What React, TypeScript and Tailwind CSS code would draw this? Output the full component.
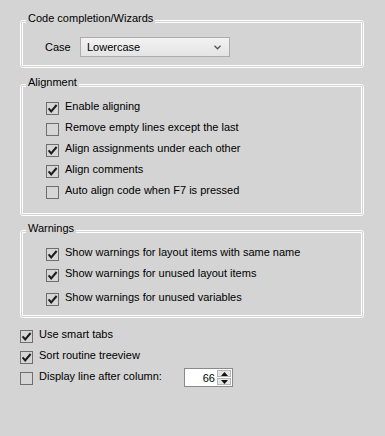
import type { ReactNode } from 'react';

function CheckBox({ checked }: { checked: boolean }) {
  return (
    <span className="mt-[3px] flex h-[13px] w-[13px] shrink-0 items-center justify-center border border-[#6e6e6e] bg-[#d6d6d6]">
      {checked && (
        <svg width="11" height="11" viewBox="0 0 11 11">
          <path d="M1.6 5.3 L4.2 8.4 L9.6 2" fill="none" stroke="#1c1c1c" strokeWidth="2" />
        </svg>
      )}
    </span>
  );
}

function Option({ label, checked, className = '' }: { label: string; checked: boolean; className?: string }) {
  return (
    <div className={`flex items-start gap-[6px] ${className}`}>
      <CheckBox checked={checked} />
      <span>{label}</span>
    </div>
  );
}

function Group({ title, className = '', children }: { title: string; className?: string; children: ReactNode }) {
  return (
    <div className={`relative w-[344px] rounded-[3px] border-[3px] border-double border-white ${className}`}>
      <span className="absolute -top-[12px] left-[3px] bg-[#d4d4d4] px-[2px]">{title}</span>
      {children}
    </div>
  );
}

export default function App() {
  return (
    <div className="h-screen w-full bg-[#d4d4d4] pl-[20px] pt-[20px] font-['Liberation_Sans',Arial,sans-serif] text-[11px] leading-[14px] text-black">
      <Group title="Code completion/Wizards" className="pb-[8px] pt-[14px]">
        <div className="flex items-center pl-[22px]">
          <span className="w-[35px] shrink-0">Case</span>
          <div className="flex h-[20px] w-[150px] items-center justify-between border border-[#acacac] bg-gradient-to-b from-[#f2f2f2] to-[#e4e4e4] pl-[6px] pr-[8px]">
            <span>Lowercase</span>
            <svg width="7" height="5" viewBox="0 0 7 5">
              <path d="M0.5 0.8 L3.5 3.8 L6.5 0.8" fill="none" stroke="#555" strokeWidth="1.3" />
            </svg>
          </div>
        </div>
      </Group>

      <Group title="Alignment" className="mt-[16px] pb-[9px] pl-[23px] pt-[12px]">
        <Option className="h-[21px]" checked label="Enable aligning" />
        <Option className="h-[21px]" checked={false} label="Remove empty lines except the last" />
        <Option className="h-[21px]" checked label="Align assignments under each other" />
        <Option className="h-[21px]" checked label="Align comments" />
        <Option className="h-[21px]" checked={false} label="Auto align code when F7 is pressed" />
      </Group>

      <Group title="Warnings" className="mt-[14px] pb-[11px] pl-[23px] pt-[12px]">
        <Option className="h-[21px]" checked label="Show warnings for layout items with same name" />
        <Option className="h-[24px]" checked label="Show warnings for unused layout items" />
        <Option className="h-[14px]" checked label="Show warnings for unused variables" />
      </Group>

      <div className="mt-[9px]">
        <Option className="h-[21px]" checked label="Use smart tabs" />
        <Option className="h-[21px]" checked label="Sort routine treeview" />
        <div className="flex items-start gap-[6px]">
          <CheckBox checked={false} />
          <span className="w-[139px] shrink-0">Display line after column:</span>
          <div className="-mt-[1px] flex h-[19px] w-[49px] items-center border border-[#8a8a8a] bg-white">
            <span className="flex-1 pr-[2px] text-right">66</span>
            <div className="flex h-full w-[15px] flex-col gap-[1px] py-[1px] pr-[1px]">
              <div className="flex flex-1 items-center justify-center border border-[#b5b5b5] bg-[#e6e6e6]">
                <svg width="7" height="4" viewBox="0 0 7 4">
                  <path d="M0 4 L3.5 0 L7 4 Z" fill="#111" />
                </svg>
              </div>
              <div className="flex flex-1 items-center justify-center border border-[#b5b5b5] bg-[#e6e6e6]">
                <svg width="7" height="4" viewBox="0 0 7 4">
                  <path d="M0 0 L3.5 4 L7 0 Z" fill="#111" />
                </svg>
              </div>
            </div>
          </div>
        </div>
      </div>
    </div>
  );
}
